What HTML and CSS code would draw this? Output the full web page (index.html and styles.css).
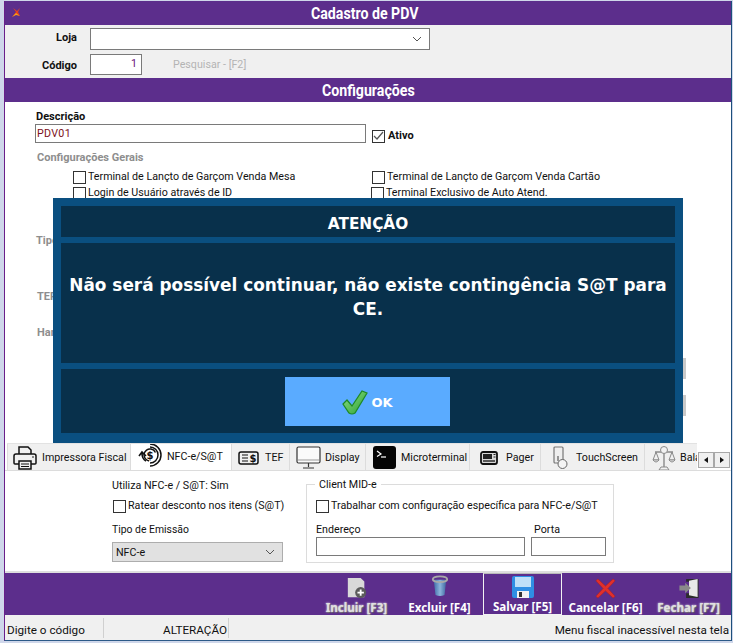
FILE: index.html
```html
<!DOCTYPE html>
<html lang="pt">
<head>
<meta charset="utf-8">
<title>Cadastro de PDV</title>
<link rel="stylesheet" href="styles.css">
</head>
<body>
<div class="window">
  <header class="titlebar titlebar-main">
    <svg class="app-logo" width="10" height="11" viewBox="0 0 10 11"><path d="M1 10 L5 5 L2 1 L6 4 L9 1 L7 5 L9 9 L5 7 Z" fill="#e8401c"/><path d="M1 10 L5 6 L9 9 L5 8 Z" fill="#f6a01a"/></svg>
    <span class="title-text">Cadastro de PDV</span>
  </header>
  <section class="search">
    <label class="search-label label-store">Loja</label>
    <div class="select select-store"><svg class="chev" width="10" height="6" viewBox="0 0 10 6"><path d="M1 1 L5 5 L9 1" fill="none" stroke="#555" stroke-width="1"/></svg></div>
    <label class="search-label label-code">Código</label>
    <div class="code-row"><div class="input code-input">1</div><span class="search-link">Pesquisar - [F2]</span></div>
  </section>
  <header class="titlebar titlebar-sub"><span class="title-text">Configurações</span></header>
  <main class="panel">
    <div class="label-bold desc-label">Descrição</div>
    <div class="desc-row">
      <div class="input desc-input">PDV01</div>
      <span class="check checked"><svg width="11" height="10" viewBox="0 0 11 10"><path d="M1 5 L4 8 L10 1" fill="none" stroke="#555" stroke-width="1.2"/></svg></span>
      <span class="label-bold">Ativo</span>
    </div>
    <div class="label-muted general-label">Configurações Gerais</div>
    <div class="check-grid">
      <div class="check-line"><span class="check"></span>Terminal de Lançto de Garçom Venda Mesa</div>
      <div class="check-line"><span class="check"></span>Terminal de Lançto de Garçom Venda Cartão</div>
      <div class="check-line"><span class="check"></span>Login de Usuário através de ID</div>
      <div class="check-line shift"><span class="check"></span>Terminal Exclusivo de Auto Atend.</div>
    </div>
    <div class="label-muted behind behind-tipo">Tipo</div>
    <div class="label-muted behind behind-tef">TEF</div>
    <div class="label-muted behind behind-han">Han</div>
    <div class="stub stub-a"></div>
    <div class="stub stub-b"></div>
  </main>
  <nav class="tabbar">
    <div class="tabs">
      <div class="tab tab-print"><svg width="26" height="26" viewBox="0 0 26 26"><g fill="none" stroke="#111" stroke-width="1.5"><path d="M7 9 V2 H16 L19 5 V9"/><path d="M7 19 H3 Q2 19 2 18 V11 Q2 9 4 9 H22 Q24 9 24 11 V18 Q24 19 23 19 H19"/><rect x="7" y="16" width="12" height="8"/><path d="M9 19 H17 M9 21.500 H17" stroke-width="1"/></g><rect x="20" y="11" width="2" height="2" fill="#888"/></svg><span>Impressora Fiscal</span></div>
      <div class="tab tab-active tab-nfe"><svg width="24" height="24" viewBox="0 0 24 24"><g fill="none" stroke="#111"><path d="M12 1 A11 11 0 0 1 12 23" stroke-width="1.500"/><path d="M12 4 A8 8 0 0 1 12 20" stroke-width="1.500"/><circle cx="12" cy="12" r="6" stroke-width="1.500" stroke-dasharray="24 14" transform="rotate(100 12 12)"/><path d="M1 13 L4 9 L8 13 M4 10 Q4 16 8 18" stroke-width="1.600"/></g><text x="12" y="15.500" class="dollar">$</text></svg><span>NFC-e/S@T</span></div>
      <div class="tab tab-tef"><svg width="21" height="14" viewBox="0 0 21 14"><rect x="1" y="1" width="19" height="12" rx="2" fill="none" stroke="#111" stroke-width="1.500"/><path d="M4 4 H10 M4 7 H10 M4 10 H10" stroke="#111" stroke-width="1.200"/><text x="15" y="10.500" class="dollar">$</text></svg><span>TEF</span></div>
      <div class="tab tab-display"><svg width="25" height="24" viewBox="0 0 25 24"><rect x="1" y="1" width="23" height="16" rx="1.500" fill="#fafafa" stroke="#333" stroke-width="1.200"/><path d="M2 14 H23" stroke="#999"/><path d="M12.500 17 V21 M7 22 H18" stroke="#333" stroke-width="1.200"/></svg><span>Display</span></div>
      <div class="tab tab-micro"><svg width="23" height="23" viewBox="0 0 23 23"><rect width="23" height="23" rx="3" fill="#050505"/><path d="M4 5 L8 8 L4 10.500" fill="none" stroke="#fff" stroke-width="1.200"/><path d="M8 11 H13" stroke="#fff" stroke-width="1.200"/></svg><span>Microterminal</span></div>
      <div class="tab tab-pager"><svg width="18" height="14" viewBox="0 0 18 14"><rect x="1" y="1" width="16" height="12" rx="2" fill="#d8d8d8" stroke="#111" stroke-width="1.800"/><rect x="3" y="3" width="9" height="5" fill="#222"/><path d="M3 10 H15" stroke="#222" stroke-width="1.400"/><path d="M13.500 3.500 H15.500 M13.500 6 H15.500" stroke="#222"/></svg><span>Pager</span></div>
      <div class="tab tab-touch"><svg width="15" height="24" viewBox="0 0 15 24"><rect x="1" y="1" width="9" height="16" rx="1" fill="#eee" stroke="#777" stroke-width="1.200"/><path d="M5 10 V15" stroke="#777" stroke-width="1.500"/><circle cx="9.500" cy="18" r="4.500" fill="#f4f4f4" stroke="#666"/></svg><span>TouchScreen</span></div>
      <div class="tab tab-scale"><svg width="24" height="26" viewBox="0 0 24 26"><g fill="#f2f2f2" stroke="#8a8a8a"><path d="M3 7 H21 M12 6 V22" stroke-width="1.400"/><path d="M4 7 L1 15 H7 Z M20 7 L17 15 H23 Z" fill="none"/><path d="M1 15 Q4 19 7 15 Z M17 15 Q20 19 23 15 Z"/><path d="M9 22 H15 L17 25 H7 Z"/><circle cx="12" cy="5" r="3.500"/></g></svg><span>Balança</span></div>
    </div>
    <div class="scroller"><button class="scroll-btn" type="button"><i class="arrow arrow-left"></i></button><button class="scroll-btn" type="button"><i class="arrow arrow-right"></i></button></div>
  </nav>
  <section class="tab-body">
    <div class="col-left">
      <div class="uses">Utiliza NFC-e / S@T:&nbsp;Sim</div>
      <div class="check-line ratear"><span class="check"></span>Ratear desconto nos itens (S@T)</div>
      <div class="emit-label">Tipo de Emissão</div>
      <div class="select select-emit">NFC-e<svg class="chev" width="10" height="6" viewBox="0 0 10 6"><path d="M1 1 L5 5 L9 1" fill="none" stroke="#555" stroke-width="1"/></svg></div>
    </div>
    <fieldset class="mid">
      <legend>Client MID-e</legend>
      <div class="check-line mid-check"><span class="check"></span>Trabalhar com configuração específica para NFC-e/S@T</div>
      <div class="mid-fields">
        <div class="field-addr"><label>Endereço</label><div class="input"></div></div>
        <div class="field-port"><label>Porta</label><div class="input"></div></div>
      </div>
    </fieldset>
  </section>
  <footer class="actions">
    <button class="action ghost" type="button"><svg width="22" height="22" viewBox="0 0 24 24"><path d="M2 1 H16 L20 5 V22 H2 Z" fill="#d9d9d9"/><circle cx="16" cy="17" r="6" fill="#5b5b5b"/><path d="M16 13.500 V20.500 M12.500 17 H19.500" stroke="#fff" stroke-width="2"/></svg><span>Incluir [F3]</span></button>
    <button class="action action-trash" type="button"><svg width="18" height="22" viewBox="0 0 20 24"><defs><linearGradient id="trash" x1="0" x2="1" y1="0" y2="0"><stop offset="0" stop-color="#3f6ca8"/><stop offset=".5" stop-color="#8db4dc"/><stop offset="1" stop-color="#3d66a0"/></linearGradient></defs><path d="M3 5 L5 22 Q10 24 15 22 L17 5 Z" fill="url(#trash)"/><ellipse cx="10" cy="4.500" rx="8" ry="3.200" fill="none" stroke="#a8a8a8" stroke-width="2"/></svg><span>Excluir [F4]</span></button>
    <button class="action action-focus" type="button"><svg width="22" height="22" viewBox="0 0 22 22"><path d="M2 0 H20 Q22 0 22 2 V20 Q22 22 20 22 H2 Q0 22 0 20 V2 Q0 0 2 0 Z" fill="#2f8fe4"/><rect x="3" y="1" width="16" height="10" fill="#bfe0f8"/><rect x="5" y="15" width="12" height="7" fill="#f2f2f2"/><rect x="7" y="16" width="3" height="5" fill="#333"/></svg><span>Salvar [F5]</span></button>
    <button class="action" type="button"><svg width="21" height="21" viewBox="0 0 22 22"><path d="M3 1 L11 8.500 L19 1 L21 3 L13.500 11 L21 19 L19 21 L11 13.500 L3 21 L1 19 L8.500 11 L1 3 Z" fill="#e0302c" stroke="#b32020" stroke-width=".6"/></svg><span>Cancelar [F6]</span></button>
    <button class="action ghost" type="button"><svg width="22" height="22" viewBox="0 0 22 23"><path d="M8 2 H21 V22 H8 V17 H11 V5 H8 Z" fill="#2b2b2b"/><path d="M11 4 L20 2 V21 L11 19 Z" fill="#e8e8e8"/><path d="M1 9 H7 V6 L13 11.500 L7 17 V14 H1 Z" fill="#8a8a8a"/></svg><span>Fechar [F7]</span></button>
  </footer>
  <footer class="status">
    <div class="status-a">Digite o código</div>
    <div class="status-b">ALTERAÇÃO</div>
    <div class="status-c">Menu fiscal inacessível nesta tela</div>
  </footer>
</div>
<div class="dialog" role="dialog">
  <div class="dialog-head">ATENÇÃO</div>
  <div class="dialog-body">Não será possível continuar, não existe contingência S@T para CE.</div>
  <div class="dialog-foot">
    <button class="ok" type="button"><svg width="26" height="25" viewBox="0 0 26 25"><defs><linearGradient id="okg" x1="0" x2="1" y1="0" y2="1"><stop offset="0" stop-color="#8fe08a"/><stop offset="1" stop-color="#2aa02e"/></linearGradient></defs><path d="M1 14 L5 10 L10 16 L20 1 L25 3 L13 23 Q10 25 7 23 Z" fill="url(#okg)" stroke="#1e8a24" stroke-width="1.200"/></svg><span>OK</span></button>
  </div>
</div>
</body>
</html>
```
FILE: styles.css
```css
* { box-sizing: border-box; }
html, body { margin: 0; padding: 0; height: 643px; overflow: hidden; }
body {
  position: relative;
  background: #cfd7ea;
  font-family: Roboto, "Noto Sans", sans-serif;
  font-size: 10.700px;
  color: #111;
}
.window {
  margin: 1px 1px 0 4px;
  height: 640px;
  width: 728px;
  background: #fff;
  border-left: 1px solid #6a1f8a;
  border-right: 1px solid #1d4f7c;
  border-bottom: 1px solid #2c5a88;
  display: flex;
  flex-direction: column;
}
.titlebar {
  position: relative;
  height: 24px;
  flex: none;
  background: #5c2e8c;
  color: #fff;
  font-family: Roboto, sans-serif;
  font-weight: 700;
  font-size: 16px;
  display: flex;
  align-items: center;
  justify-content: center;
}
.title-text { display: block; transform: scaleX(.885); }
.titlebar-main .title-text { margin-right: 7px; }
.titlebar-sub { height: 24px; }
.app-logo { position: absolute; left: 6px; top: 6px; }
.search {
  height: 53px;
  flex: none;
  background: #f0f0f0;
  display: grid;
  grid-template-columns: 72px 340px;
  grid-template-rows: 22px 21px;
  row-gap: 4px;
  column-gap: 13px;
  padding-top: 3px;
  align-items: center;
}
.search-label { font-weight: 700; text-align: right; font-size: 11px; }
.label-store { margin-bottom: 4px; }
.label-code { margin-top: 2px; }
.select, .input {
  background: #fff;
  border: 1px solid #7a7a7a;
  height: 100%;
  position: relative;
}
.select { display: flex; align-items: center; }
.chev { margin-left: auto; margin-right: 7px; }
.code-row { display: flex; align-items: center; height: 21px; }
.code-input {
  width: 52px;
  color: #6a0f7a;
  text-align: right;
  padding: 2px 4px 0 0;
}
.search-link { margin-left: 31px; color: #b4b4b4; }
.panel {
  height: 341px;
  flex: none;
  padding-top: 8px;
  background: #fff;
  display: flex;
  flex-direction: column;
}
.label-bold { font-weight: 700; font-size: 11px; line-height: 14px; }
.label-muted { font-weight: 700; font-size: 11px; color: #8e8e8e; line-height: 14px; }
.desc-label { margin-left: 31px; }
.desc-row { display: flex; align-items: center; margin-left: 30px; height: 19px; }
.desc-input {
  width: 331px;
  height: 19px;
  color: #7d1020;
  padding-left: 1px;
  line-height: 17px;
  letter-spacing: .3px;
}
.desc-row .check { margin-left: 6px; margin-right: 3px; margin-top: 5px; }
.desc-row .label-bold { margin-top: 5px; }
.check {
  display: inline-flex;
  align-items: center;
  justify-content: center;
  width: 13px;
  height: 13px;
  flex: none;
  border: 1px solid #333;
  background: #fff;
  margin-right: 2px;
}
.general-label { margin: 8px 0 0 32px; }
.check-grid {
  display: grid;
  grid-template-columns: 299px 300px;
  grid-auto-rows: 16px;
  margin: 4px 0 0 68px;
}
.check-line { display: flex; align-items: center; white-space: nowrap; line-height: 16px; }
.check-line.shift { margin-left: -1px; }
.behind { margin-left: 32px; }
.behind-tipo { margin-top: 33px; margin-left: 31px; }
.behind-tef { margin-top: 42px; }
.behind-han { margin-top: 22px; }
.stub { width: 3px; height: 21px; background: #c9c9c9; margin-left: 678px; }
.stub-a { margin-top: 18px; }
.stub-b { margin-top: 16px; }
.tabbar {
  height: 28px;
  flex: none;
  display: flex;
  align-items: flex-start;
  padding-left: 2px;
  background: #fff;
  border-bottom: 1px solid #dcdcdc;
}
.tabs {
  width: 690px;
  height: 27px;
  overflow: hidden;
  display: flex;
  background: #f0f0f0;
  border-top: 1px solid #e2e2e2;
}
.tab {
  flex: none;
  height: 27px;
  display: flex;
  align-items: center;
  border-right: 1px solid #dcdcdc;
  white-space: nowrap;
  padding-left: 6px;
  gap: 5px;
}
.tab svg, .tab span { flex: none; }
.tab-print { width: 124px; border-left: 1px solid #dcdcdc; padding-left: 4px; gap: 4px; }
.tab-nfe { width: 101px; padding-left: 7px; gap: 5px; height: 28px; }
.tab-nfe svg { margin-bottom: 7px; }
.tab-nfe span { margin-bottom: 3px; }
.tab-active { background: #fff; }
.tab-tef { width: 58px; gap: 6px; }
.tab-display { width: 76px; gap: 4px; }
.tab-micro { width: 104px; padding-left: 7px; }
.tab-pager { width: 71px; padding-left: 10px; gap: 8px; }
.tab-touch { width: 104px; padding-left: 12px; gap: 8px; }
.tab-scale { width: 60px; padding-left: 7px; gap: 4px; }
.scroller { display: flex; margin: 9px 0 0 1px; }
.scroll-btn {
  width: 16px;
  height: 16px;
  padding: 0;
  border: 1px solid #a8a8a8;
  background: #f0f0f0;
  display: flex;
  align-items: center;
  justify-content: center;
}
.arrow { display: block; width: 0; height: 0; border-top: 3px solid transparent; border-bottom: 3px solid transparent; }
.arrow-left { border-right: 4px solid #111; }
.arrow-right { border-left: 4px solid #111; }
.dollar { font-family: "DejaVu Sans", sans-serif; font-weight: 700; font-size: 10px; text-anchor: middle; fill: #111; }
.tab-body {
  height: 102px;
  flex: none;
  display: flex;
  background: #fff;
  border-bottom: 2px solid #dedede;
  padding: 0 0 0 107px;
}
.col-left { width: 194px; padding-top: 8px; }
.uses { line-height: 14px; }
.ratear { margin: 5px 0 0 1px; }
.emit-label { line-height: 14px; margin-top: 9px; font-size: 10.400px; }
.select-emit {
  margin-top: 5px;
  width: 171px;
  height: 20px;
  background: #e1e1e1;
  border-color: #adadad;
  padding-left: 3px;
}
.mid {
  margin: 6px 0 0 0;
  padding: 0 0 0 9px;
  width: 308px;
  height: 86px;
  border: 1px solid #dcdcdc;
  min-width: 0;
}
.mid legend { padding: 0 4px; margin-left: -1px; line-height: 14px; transform: translateY(1px); }
.mid-check { margin-top: 7px; height: 16px; }
.mid-fields { display: flex; margin-top: 9px; gap: 6px; }
.mid-fields label { display: block; line-height: 14px; }
.mid-fields .input { height: 19px; }
.field-addr { width: 209px; }
.field-port { width: 75px; }
.field-port label { margin-left: 3px; }
.actions {
  height: 42px;
  flex: none;
  background: #5c2e8c;
  display: flex;
  justify-content: flex-end;
  gap: 4px;
  padding-right: 3px;
}
.action {
  width: 79px;
  padding: 0;
  border: 0;
  background: transparent;
  color: #fff;
  font-family: "Noto Sans", sans-serif;
  font-weight: 700;
  font-size: 11.600px;
  display: flex;
  flex-direction: column;
  align-items: center;
  justify-content: flex-end;
  gap: 1px;
  white-space: nowrap;
}
.action svg { flex: none; }
.action-trash svg { margin-bottom: 2px; }
.action-focus { border: 1px solid #f2f2f2; border-top-color: #b9b9b9; }
.ghost { color: #e0e0e0; text-shadow: 0 0 2px #fff, 1px 1px 1px #444; }
.status {
  flex: 1;
  background: #f0f0f0;
  display: flex;
  align-items: center;
  padding: 3px 0 2px 2px;
  font-size: 11.700px;
}
.status > div { height: 100%; display: flex; align-items: center; padding-top: 3px; }
.status-a { width: 97px; border-right: 1px solid #d0d0d0; }
.status-b { width: 125px; justify-content: flex-end; border-right: 1px solid #d0d0d0; padding-right: 1px; }
.status-c { flex: 1; justify-content: flex-end; padding-right: 2px; }
.dialog {
  position: absolute;
  left: 53px;
  top: 198px;
  width: 630px;
  height: 245px;
  background: #0a4f80;
  padding: 8px 8px 10px;
  display: flex;
  flex-direction: column;
  gap: 6px;
  color: #fff;
  font-family: "DejaVu Sans", sans-serif;
  font-weight: 700;
}
.dialog-head {
  height: 31px;
  background: #08304b;
  display: flex;
  align-items: center;
  justify-content: center;
  font-size: 15.300px;
  padding-top: 4px;
}
.dialog-body {
  height: 120px;
  background: #08304b;
  display: flex;
  align-items: center;
  text-align: center;
  font-size: 16.900px;
  line-height: 24px;
  padding: 0 5px 12px;
}
.dialog-foot {
  height: 64px;
  background: #08304b;
  display: flex;
  justify-content: center;
  padding: 8px 0 0 0;
}
.ok {
  width: 165px;
  height: 49px;
  margin-left: -1px;
  border: 0;
  padding: 2px 0 0;
  background: #5aabff;
  color: #fff;
  font-family: "DejaVu Sans", sans-serif;
  font-weight: 700;
  font-size: 13px;
  display: flex;
  align-items: center;
  justify-content: center;
  gap: 3px;
}
```
